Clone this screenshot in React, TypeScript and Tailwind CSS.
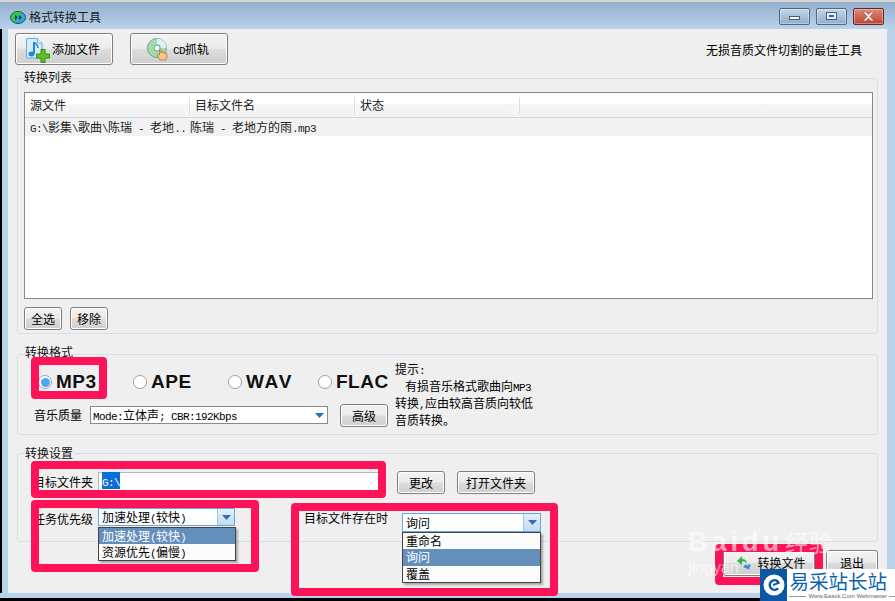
const fontCls = "[font-family:'Noto_Sans_CJK_SC','Liberation_Sans',sans-serif]";

// half-width latin, like the bitmap font in the old dialog
const L = ({ children }: { children: React.ReactNode }) => (
  <span className="[font-family:'Liberation_Mono',monospace] text-[11px] leading-none tracking-[-0.6px]">{children}</span>
);

const WinBtn = ({ className, children }: { className: string; children: React.ReactNode }) => (
  <div className={`flex h-[17px] w-[31px] items-center justify-center rounded-[2px] border shadow-[inset_0_0_0_1px_rgba(255,255,255,0.35)] ${className}`}>{children}</div>
);

const Button = ({ className, children }: { className: string; children: React.ReactNode }) => (
  <div className={`flex shrink-0 items-center justify-center rounded-[3px] border border-[#7f7f7f] bg-[linear-gradient(#f3f3f3_0%,#ebebeb_48%,#dcdcdc_52%,#cfcfcf_100%)] text-[12px] text-black shadow-[inset_0_0_0_1px_#fff] ${className}`}>
    {children}
  </div>
);

const GroupBox = ({ title, legend, className, children }: { title: string; legend: string; className: string; children: React.ReactNode }) => (
  <div className={`relative ml-[9px] w-[861px] shrink-0 rounded-[3px] border border-[#d5dfe8] ${className}`}>
    <span className={`absolute bg-[#efefef] pr-px text-[12px] leading-[14px] text-[#111] ${legend}`}>{title}</span>
    {children}
  </div>
);

const Radio = ({ on, label, className }: { on?: boolean; label: string; className: string }) => (
  <div className={`absolute top-[16px] flex items-center ${className}`}>
    <div className="flex h-[14px] w-[14px] items-center justify-center rounded-full border border-[#a0a0a0] bg-white">
      {on && <div className="h-[9px] w-[9px] rounded-full bg-[#4da6f5]" />}
    </div>
    <span className="ml-[4px] [font-family:'Liberation_Sans',sans-serif] text-[19px] leading-[22px] font-bold tracking-[0.5px] text-[#111] [font-kerning:none]">{label}</span>
  </div>
);

const Arrow = () => (
  <svg width="9" height="5" viewBox="0 0 9 5"><path d="M0 0h9L4.500 5z" fill="#2f6fb5" /></svg>
);

const Frame = ({ className }: { className: string }) => (
  <div className={`absolute rounded-[4px] border-[8px] border-[#fe1358] ${className}`} />
);

const ComboArrow = () => (
  <div className="flex h-full w-[17px] items-center justify-center border-l border-[#9cc3e6] bg-[linear-gradient(#e6f0fa,#c2daf0)]">
    <Arrow />
  </div>
);

export default function App() {
  return (
    <div className={`relative flex h-[601px] w-[895px] flex-col overflow-hidden bg-black ${fontCls}`}>
      <div className="h-[2px] shrink-0 bg-[#d9d6d2]" />
      {/* title bar */}
      <div className="flex h-[27px] shrink-0 items-center bg-[linear-gradient(#93afcd,#b9d3ec)] pt-[3px] pr-[11px] pl-[10px]">
        <svg width="16" height="13" viewBox="0 0 16 13">
          <ellipse cx="8" cy="6.500" rx="7.500" ry="6" fill="#35a9d8" stroke="#14592f" />
          <path d="M1 6.500C1 3 4 1 8 1c2 0 3 .5 4 1L4 11C2 10 1 8 1 6.500z" fill="#3cc24a" />
          <path d="M5 4l3 2.500L5 9zM9 4l3 2.500L9 9z" fill="#0b3d66" />
        </svg>
        <span className="ml-[3px] text-[12px] leading-[16px] text-[#1b1b1b]">格式转换工具</span>
        <div className="mt-[-2px] ml-auto flex gap-[6px]">
          <WinBtn className="border-[#4d6a87] bg-[linear-gradient(#c3d6e8,#8fadcb)]">
            <div className="mt-[4px] h-[4px] w-[11px] border border-[#4a5f75] bg-white" />
          </WinBtn>
          <WinBtn className="border-[#4d6a87] bg-[linear-gradient(#c3d6e8,#8fadcb)]">
            <div className="flex h-[8px] w-[11px] items-center justify-center border border-[#4a5f75] bg-[#e9eff5]">
              <div className="h-[2px] w-[5px] bg-[#4a5f75]" />
            </div>
          </WinBtn>
          <WinBtn className="border-[#6b2323] bg-[linear-gradient(#dc8c7c,#c0412c)]">
            <svg width="13" height="9" viewBox="0 0 13 9">
              <path d="M1 0h3l2.500 2.500L9 0h3L8 4.500 12 9H9L6.500 6.500 4 9H1l4-4.500z" fill="#f4f1ee" stroke="#7a3a30" strokeWidth="0.500" />
            </svg>
          </WinBtn>
        </div>
      </div>

      <div className="flex h-[564px] shrink-0">
        <div className="w-[2px] bg-black" />
        <div className="w-[6px] bg-[#b8d2ea]" />
        {/* client area */}
        <div className="flex h-[564px] w-[879px] flex-col bg-[#efefef]">
          <div className="flex h-[36px] shrink-0 items-end pl-[7px]">
            <Button className="h-[32px] w-[98px] justify-start pl-[9px]">
              <svg width="26" height="25" viewBox="0 0 26 25" className="mt-[3px] mr-px">
                <path d="M1.500.500h11l4.500 4.500v15H1.500z" fill="#d7ecfb" stroke="#69a9df" />
                <path d="M12.500.500V5H17" fill="#fff" stroke="#69a9df" />
                <path d="M9 4v12" stroke="#2188d8" strokeWidth="2" />
                <path d="M9 4c2 3 4 2 4 6" stroke="#2188d8" strokeWidth="1.500" fill="none" />
                <ellipse cx="6.500" cy="16" rx="3" ry="2.500" fill="#2188d8" />
                <path d="M16 11.500h4v4.500h4.500v4H20v4.500h-4V20h-4.500v-4H16z" fill="#64c21f" stroke="#2f8a12" />
              </svg>
              添加文件
            </Button>
            <Button className="ml-[17px] h-[32px] w-[98px] justify-start pl-[15px]">
              <svg width="26" height="23" viewBox="0 0 26 23">
                <circle cx="11" cy="10" r="9.500" fill="#a6dca0" stroke="#5ba4b8" />
                <path d="M11 .5A9.500 9.500 0 0 1 20.500 10H15a4 4 0 0 0-4-4z" fill="#dff3f7" />
                <circle cx="11" cy="10" r="3" fill="#fff" stroke="#5ba4b8" />
                <path d="M14 22c-1.500-2-2.500-3-2.500-5 0-1 1-1 2 0v-5c0-1 1.500-1 1.500 0v3-1c0-1 2-1 2 0v1c0-1 2-1 2 0v1c0-1 2-1 2 0v3c0 2-1 2-1 3z" fill="#f5c58c" stroke="#b5763a" strokeWidth="0.800" />
              </svg>
              <span className="ml-px"><L>CD</L>抓轨</span>
            </Button>
            <span className="ml-auto pr-[25px] pb-[7px] text-[12px] leading-[16px] text-black">无损音质文件切割的最佳工具</span>
          </div>

          <GroupBox title="转换列表" legend="-top-[9px] left-[6px]" className="mt-[13px] h-[256px] pt-[13px] pl-[6px]">
            <div className="h-[207px] w-[849px] border border-[#828790] bg-white">
              <div className="flex h-[25px] border-b border-[#d5d5d5] bg-[linear-gradient(#fff_0%,#fff_45%,#f5f6f8_46%,#f1f2f4_100%)] text-[12px] text-[#222]">
                <div className="mt-[4px] h-[17px] w-[165px] border-r border-[#dcdcdc] pl-[5px] leading-[16px]">源文件</div>
                <div className="mt-[4px] h-[17px] w-[165px] border-r border-[#dcdcdc] pl-[5px] leading-[16px]">目标文件名</div>
                <div className="mt-[4px] h-[17px] w-[165px] border-r border-[#dcdcdc] pl-[5px] leading-[16px]">状态</div>
              </div>
              <div className="flex h-[18px] bg-[#f2f2f2] text-[12px] leading-[18px] text-[#222]">
                <span className="w-[165px] pl-[5px] whitespace-nowrap"><L>G:\</L>影集<L>\</L>歌曲<L>\</L>陈瑞<L> - </L>老地<L>..</L></span>
                <span className="whitespace-nowrap">陈瑞<L> - </L>老地方的雨<L>.mp3</L></span>
              </div>
            </div>
            <div className="mt-[8px] flex gap-[8px]">
              <Button className="h-[23px] w-[38px]">全选</Button>
              <Button className="h-[23px] w-[38px]">移除</Button>
            </div>
          </GroupBox>

          <GroupBox title="转换格式" legend="-top-[10px] left-[7px]" className="mt-[20px] h-[81px]">
            <Radio on label="MP3" className="left-[20px]" />
            <Radio label="APE" className="left-[115px]" />
            <Radio label="WAV" className="left-[210px]" />
            <Radio label="FLAC" className="left-[300px]" />
            <div className="flex">
              <div className="flex w-[377px] pt-[51px] pl-[16px]">
                <span className="text-[12px] leading-[17px] text-black">音乐质量</span>
                <div className="ml-[8px] flex h-[18px] w-[238px] items-center border border-[#8a8a8a] bg-white pl-[2px] text-[12px] whitespace-nowrap text-black">
                  <span><L>Mode:</L>立体声<L>; CBR:192Kbps</L></span>
                  <span className="mr-[3px] ml-auto"><Arrow /></span>
                </div>
                <Button className="mt-[-2px] ml-[12px] h-[23px] w-[48px]">高级</Button>
              </div>
              <div className="pt-[5px] text-[12px] leading-[17px] text-black">
                <div>提示<L>:</L></div>
                <div className="pl-[10px] whitespace-nowrap">有损音乐格式歌曲向<L>MP3</L></div>
                <div className="whitespace-nowrap">转换<L>,</L>应由较高音质向较低</div>
                <div className="whitespace-nowrap">音质转换。</div>
              </div>
            </div>
          </GroupBox>

          <GroupBox title="转换设置" legend="-top-[8px] left-[7px]" className="mt-[18px] h-[89px]">
            <div className="flex items-start pt-[17px]">
              <span className="ml-[15px] text-[12px] leading-[22px] text-black">目标文件夹</span>
              <div className="mt-px ml-[5px] h-[19px] w-[285px] border border-[#b5b5b5] bg-white pl-[3px] text-[12px] leading-[16px]">
                <span className="bg-[#0a6fd6] text-white"><L>G:\</L></span>
              </div>
              <Button className="ml-[14px] h-[23px] w-[48px]">更改</Button>
              <Button className="ml-[12px] h-[23px] w-[78px]">打开文件夹</Button>
            </div>
            <div className="flex items-start pt-[14px]">
              <span className="ml-[15px] text-[12px] leading-[22px] text-black">任务优先级</span>
              <div className="ml-[5px] flex h-[18px] w-[137px] items-center border border-[#5fa9e6] bg-white pl-[3px] text-[12px] text-black">
                <span>加速处理<L>(</L>较快<L>)</L></span>
                <div className="ml-auto h-full"><ComboArrow /></div>
              </div>
              <span className="ml-[69px] text-[12px] leading-[20px] text-black">目标文件存在时</span>
              <div className="mt-[5px] ml-[14px] flex h-[19px] w-[139px] items-center border border-[#5fa9e6] bg-white pl-[3px] text-[12px] text-black">
                询问
                <div className="ml-auto h-full"><ComboArrow /></div>
              </div>
            </div>
          </GroupBox>

          <div className="mt-[8px] flex justify-end gap-[11px] pr-[9px]">
            <Button className="h-[26px] w-[92px] pl-[3px]">
              <svg width="18" height="16" viewBox="0 0 18 16" className="mr-[4px]">
                <path d="M2 6l5-5v3c3 0 5 2 5 4-2-1-3-2-5-1v3z" fill="#2fb84a" />
                <path d="M8 12l3-3 1 2 2-2 2 2-2 2 1 2z" fill="#3a8fd8" />
              </svg>
              转换文件
            </Button>
            <Button className="h-[26px] w-[52px]">退出</Button>
          </div>
        </div>
        <div className="w-[8px] bg-[#b8d2ea]" />
      </div>

      <div className="h-[5px] shrink-0 bg-[#b8d2ea]" />

      {/* open dropdown lists */}
      <div className="absolute top-[527px] left-[98px] w-[138px] border border-[#444] bg-[#fbfbfb] text-[12px] leading-[15px] text-black shadow-[2px_2px_2px_rgba(0,0,0,0.3)]">
        <div className="h-[16px] bg-[#648fbb] pl-[3px] text-white">加速处理<L>(</L>较快<L>)</L></div>
        <div className="h-[16px] pl-[3px]">资源优先<L>(</L>偏慢<L>)</L></div>
      </div>
      <div className="absolute top-[532px] left-[402px] w-[139px] border border-[#444] bg-[#fbfbfb] text-[12px] leading-[15px] text-black shadow-[2px_2px_2px_rgba(0,0,0,0.3)]">
        <div className="h-[16px] pl-[3px]">重命名</div>
        <div className="h-[17px] bg-[#648fbb] pl-[3px] leading-[16px] text-white">询问</div>
        <div className="h-[16px] pl-[3px]">覆盖</div>
      </div>

      {/* red annotation frames */}
      <Frame className="top-[357px] left-[31px] h-[42px] w-[76px]" />
      <Frame className="top-[461px] left-[31px] h-[37px] w-[355px]" />
      <Frame className="top-[500px] left-[31px] h-[72px] w-[228px]" />
      <Frame className="top-[503px] left-[291px] h-[93px] w-[267px]" />
      <Frame className="top-[544px] left-[715px] h-[41px] w-[108px]" />

      {/* watermarks */}
      <div className="absolute top-[526px] left-[688px] flex items-end whitespace-nowrap text-white/60">
        <span className="[font-family:'Liberation_Sans',sans-serif] text-[27px] leading-[32px] font-bold tracking-[4px]">Baidu</span>
        <span className="ml-[2px] text-[24px] leading-[32px]">经验</span>
      </div>
      <div className="absolute top-[559px] left-[688px] [font-family:'Liberation_Sans',sans-serif] text-[16px] leading-[18px] whitespace-nowrap text-white/60">jingyan</div>

      <div className="absolute top-[569px] left-[760px] flex h-[32px] w-[135px] bg-white">
        <div className="flex h-[32px] w-[33px] items-center justify-center bg-[#0a58a3]">
          <svg width="22" height="22" viewBox="0 0 22 22">
            <circle cx="11" cy="11" r="10.500" fill="#fff" />
            <path d="M16 7a6 6 0 1 0 0 8l-2-1.500a3.500 3.500 0 1 1 0-5l-4 1.500v2l7-2.500z" fill="#0a58a3" />
          </svg>
        </div>
        <div className="ml-[2px] flex flex-col">
          <span className="text-[19.500px] leading-[24px] whitespace-nowrap text-[#0a63ad]">易采站长站</span>
          <div className="flex items-center gap-[2px]">
            <div className="h-px w-[17px] bg-[#999]" />
            <span className="[font-family:'Liberation_Sans',sans-serif] text-[6px] leading-[7px] whitespace-nowrap text-[#666]">Www.Easck.Com Webmaster</span>
            <div className="h-px w-[6px] bg-[#999]" />
          </div>
        </div>
      </div>
    </div>
  );
}
